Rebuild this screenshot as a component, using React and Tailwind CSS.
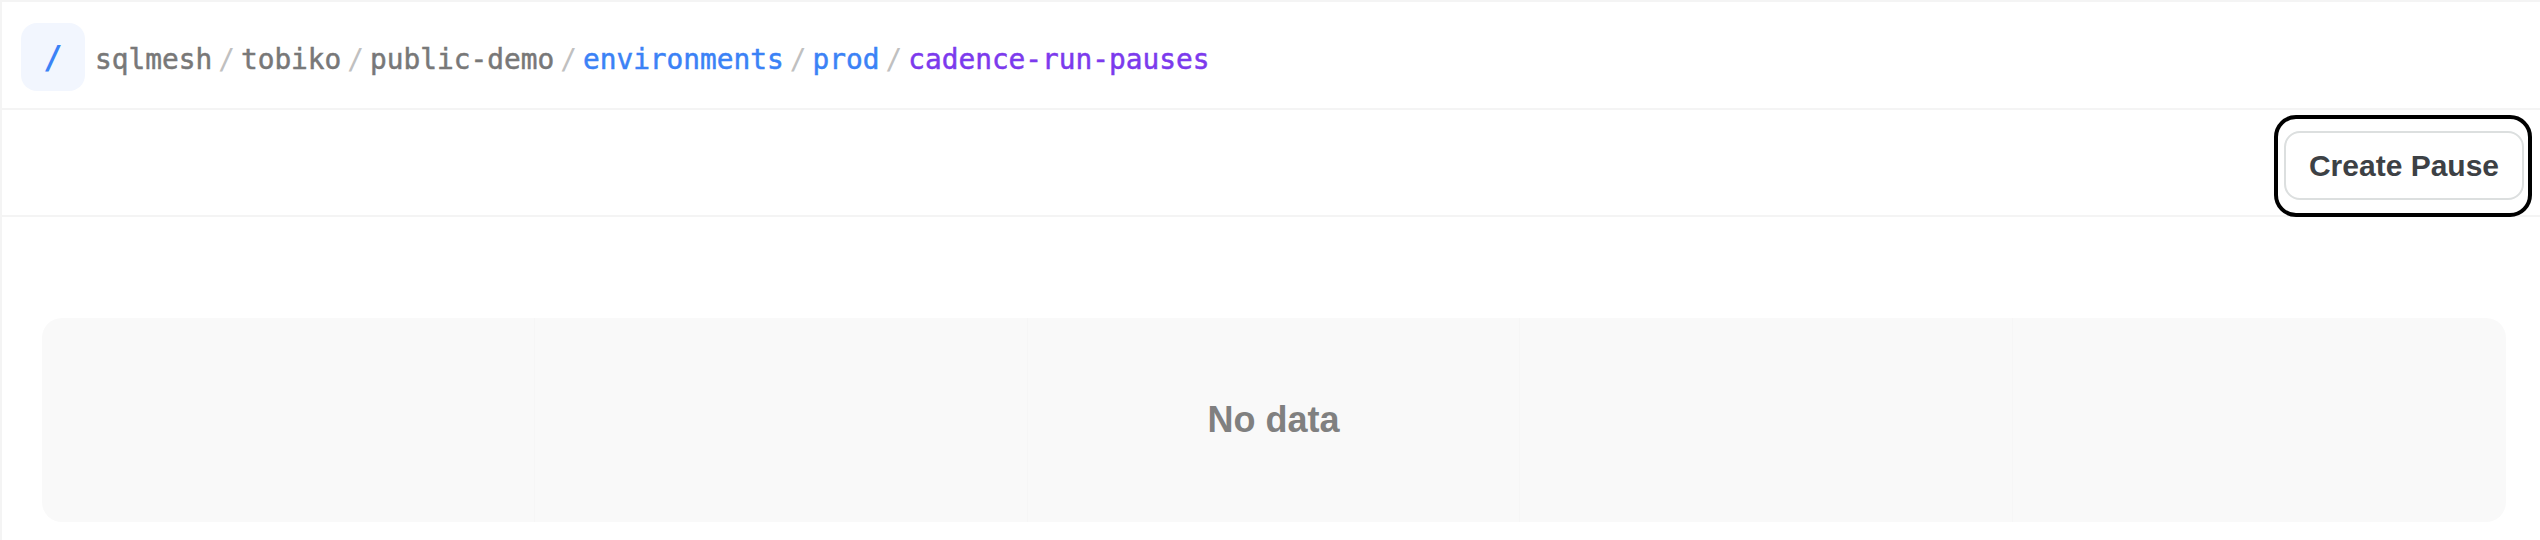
import React from 'react';

const crumbs = [
  { label: 'sqlmesh', tone: 'text-[#787878]' },
  { label: 'tobiko', tone: 'text-[#787878]' },
  { label: 'public-demo', tone: 'text-[#787878]' },
  { label: 'environments', tone: 'text-[#3b82f6]' },
  { label: 'prod', tone: 'text-[#3b82f6]' },
  { label: 'cadence-run-pauses', tone: 'text-[#7c3aed]' },
];

const mono = "font-['DejaVu_Sans_Mono','Liberation_Mono',monospace]";

const Breadcrumbs = () => (
  <div
    className={`flex items-center ml-[10px] mt-[5px] text-[27.8px] leading-none [-webkit-text-stroke:0.5px_currentColor] ${mono}`}
  >
    {crumbs.map((c, i) => (
      <React.Fragment key={c.label}>
        {i > 0 && <span className="mx-1.5 text-[#c0c0c0] [-webkit-text-stroke:0px]">/</span>}
        <span className={c.tone}>{c.label}</span>
      </React.Fragment>
    ))}
  </div>
);

const App = () => {
  return (
    <div className="h-[540px] bg-white border-l-2 border-t-2 border-[#f4f4f4] font-['Liberation_Sans',Arial,sans-serif]">
      {/* top bar */}
      <div className="flex items-start h-[108px] pl-[19px] pt-[21px] border-b-2 border-[#f4f4f4]">
        <div className="flex items-center">
          <div
            className={`flex items-center justify-center w-16 h-[68px] rounded-2xl bg-[#f2f6fe] text-[#3b82f6] text-[32px] font-bold ${mono}`}
          >
            /
          </div>
          <Breadcrumbs />
        </div>
      </div>

      {/* actions */}
      <div className="flex items-start justify-end h-[107px] pr-[8px] pt-[5px] border-b-2 border-[#f4f4f4]">
        <div className="h-[102px] rounded-[22px] border-4 border-black pl-[6px] pr-[4px] pt-[12px]">
          <button className="w-[240px] h-[69px] rounded-2xl border-2 border-[#dcdfdf] bg-white text-[30px] font-bold text-[#3d4145]">
            Create Pause
          </button>
        </div>
      </div>

      {/* empty table */}
      <div className="mt-[101px] ml-[40px] mr-[34px] h-[204px] rounded-[20px] bg-[#f9f9f9] grid grid-cols-5 overflow-hidden">
        <div className="border-r border-[#f6f6f6]"></div>
        <div className="border-r border-[#f6f6f6]"></div>
        <div className="flex items-center justify-center border-r border-[#f6f6f6]">
          <span className="text-[36px] font-bold text-[#808080]">No data</span>
        </div>
        <div className="border-r border-[#f6f6f6]"></div>
        <div></div>
      </div>
    </div>
  );
};

export default App;
